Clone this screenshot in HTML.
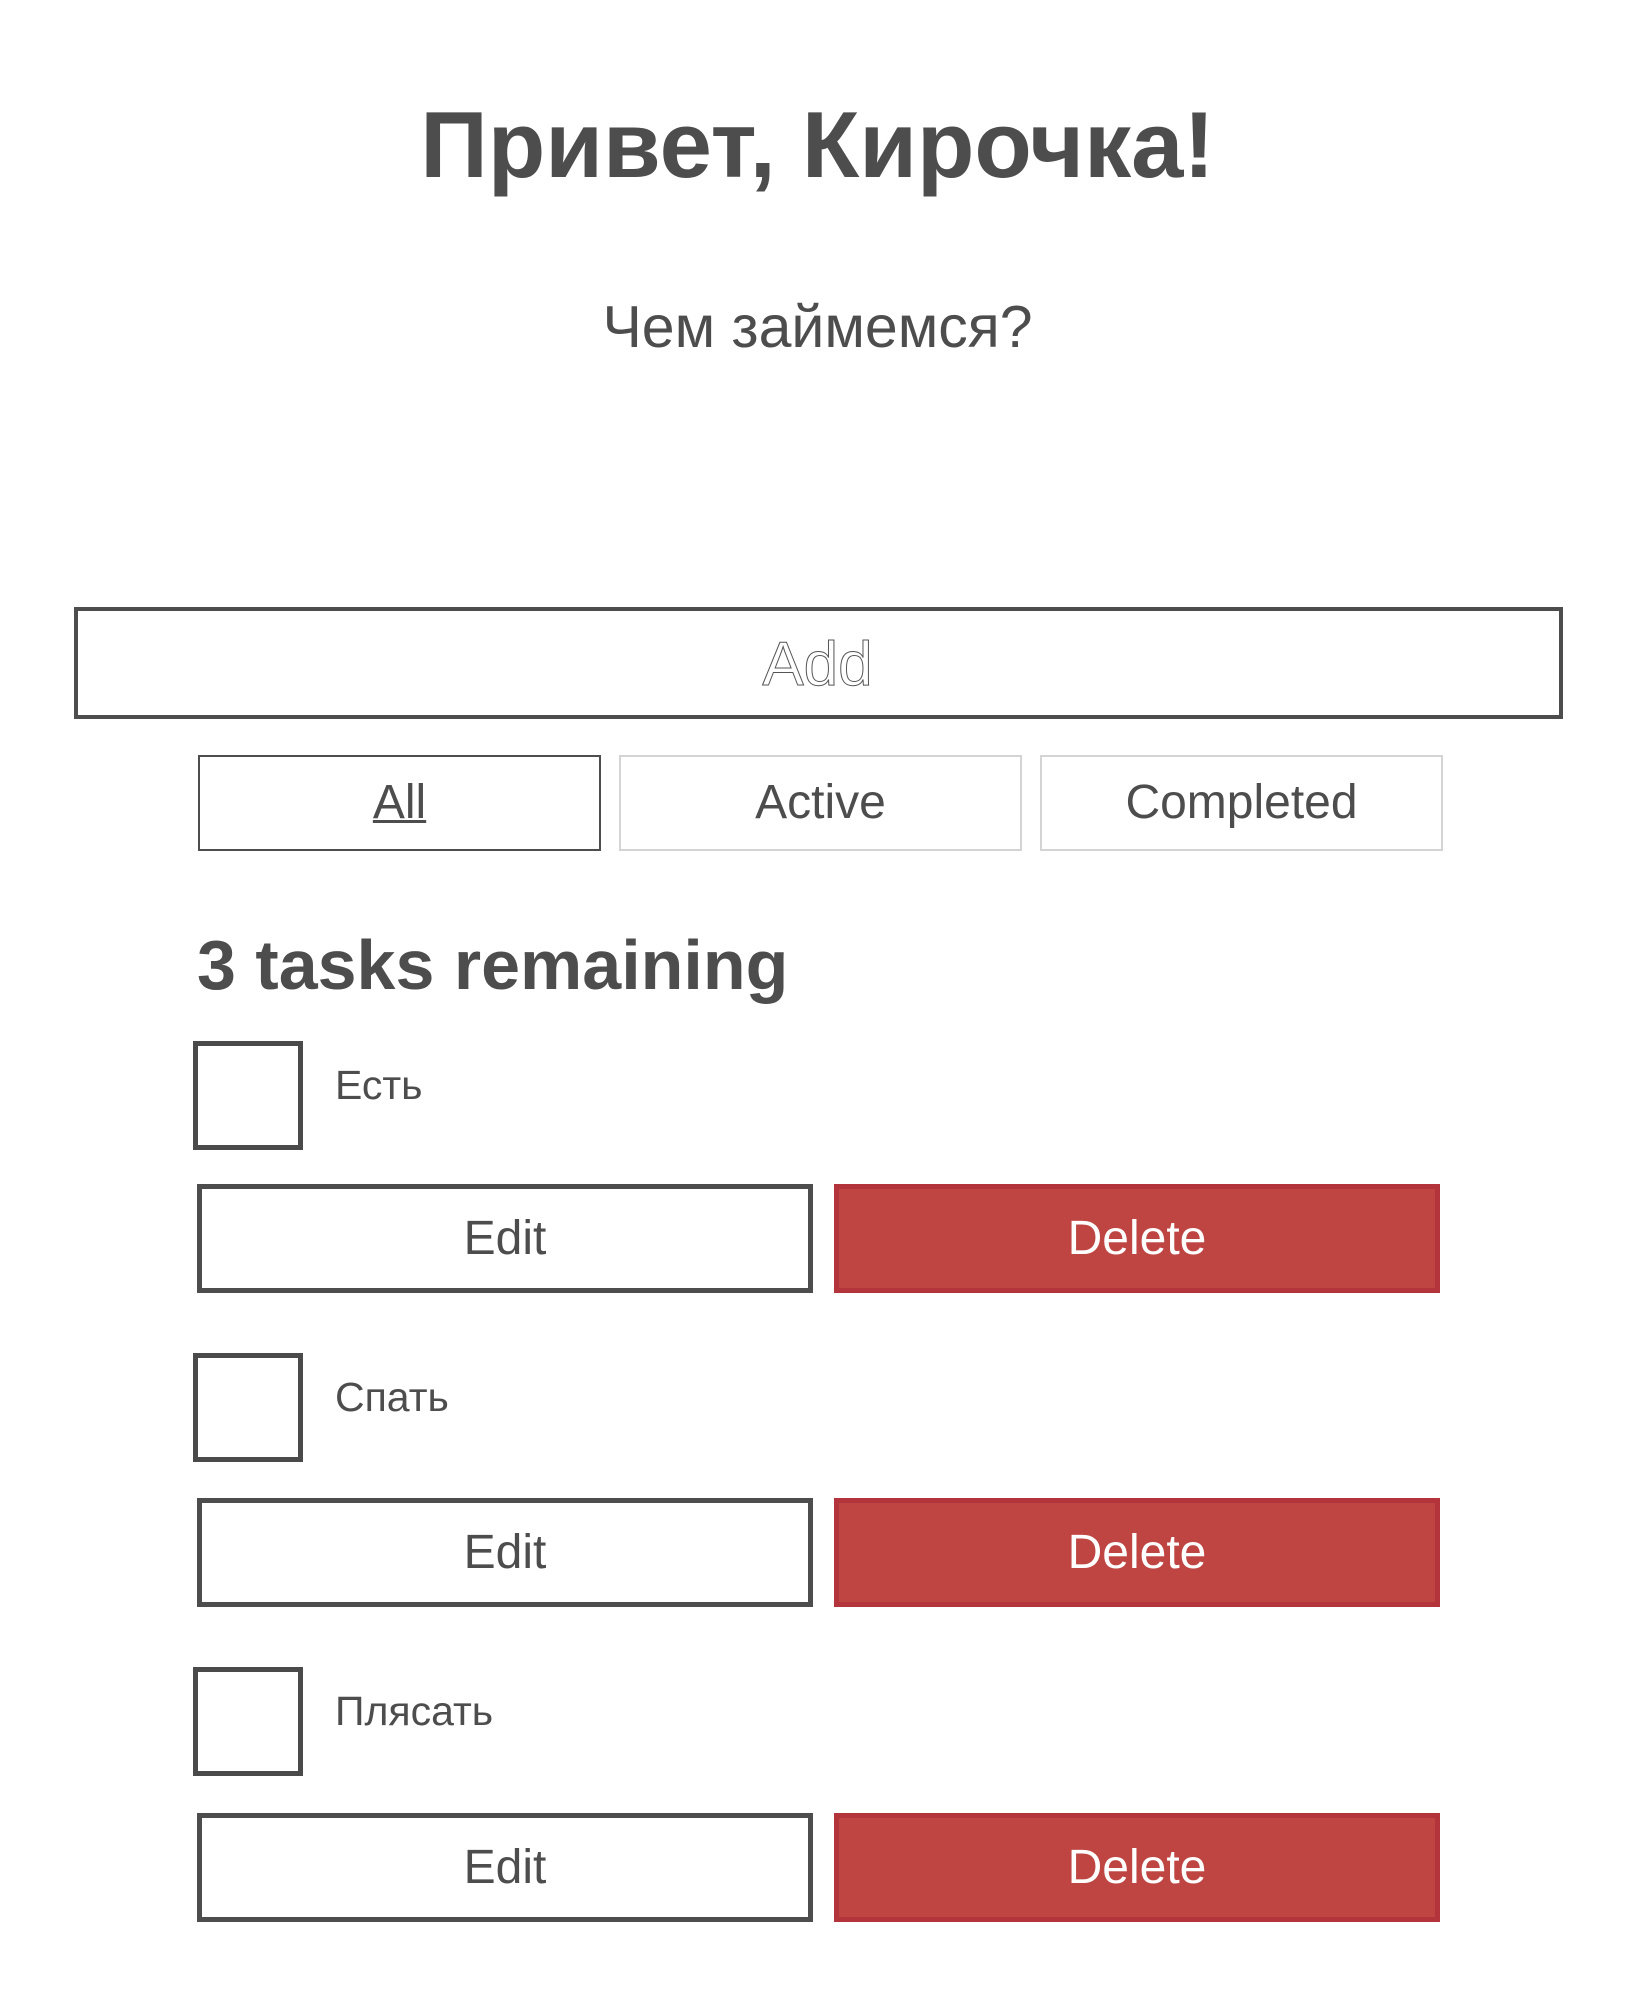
<!DOCTYPE html>
<html><head><meta charset="utf-8"><style>
*{margin:0;padding:0;box-sizing:border-box}
html,body{width:1635px;height:2015px;background:#fff;overflow:hidden}
body{position:relative;font-family:"Liberation Sans",Arial,sans-serif;color:#4d4d4d}
.a{position:absolute}
.t{white-space:nowrap;line-height:1}
.btn{position:absolute;display:flex;align-items:center;justify-content:center;font-size:48px;line-height:1}
.cb{position:absolute;width:110px;height:109px;border:5px solid #4a4a4a;background:#fff}
.lbl{position:absolute;font-size:41px;line-height:1;white-space:nowrap}
.edit{border:5px solid #4d4d4d;background:#fff;color:#4d4d4d}
.del{border:5px solid #b3343a;background:#bf4542;color:#fff}
</style></head><body>
<div class="a t" style="left:0;width:1635px;text-align:center;top:98px;font-size:94px;font-weight:bold">Привет, Кирочка!</div>
<div class="a t" style="left:0;width:1635px;text-align:center;top:298px;font-size:59px">Чем займемся?</div>
<div class="a" style="left:74px;top:607px;width:1489px;height:112px;border:4px solid #4d4d4d"></div>
<div class="a t" style="left:0;width:1635px;text-align:center;top:634px;font-size:62px;color:transparent;-webkit-text-stroke:1px #555">Add</div>
<div class="btn" style="left:198px;top:755px;width:403px;height:96px;border:2px solid #4d4d4d"><span style="text-decoration:underline;text-decoration-thickness:3px">All</span></div>
<div class="btn" style="left:619px;top:755px;width:403px;height:96px;border:2px solid #d4d4d4">Active</div>
<div class="btn" style="left:1040px;top:755px;width:403px;height:96px;border:2px solid #d4d4d4">Completed</div>
<div class="a t" style="left:197px;top:930px;font-size:70px;font-weight:bold">3 tasks remaining</div>

<div class="cb" style="left:193px;top:1041px"></div>
<div class="lbl" style="left:335px;top:1065px">Есть</div>
<div class="btn edit" style="left:197px;top:1184px;width:616px;height:109px">Edit</div>
<div class="btn del" style="left:834px;top:1184px;width:606px;height:109px">Delete</div>

<div class="cb" style="left:193px;top:1353px"></div>
<div class="lbl" style="left:335px;top:1377px">Спать</div>
<div class="btn edit" style="left:197px;top:1498px;width:616px;height:109px">Edit</div>
<div class="btn del" style="left:834px;top:1498px;width:606px;height:109px">Delete</div>

<div class="cb" style="left:193px;top:1667px"></div>
<div class="lbl" style="left:335px;top:1691px">Плясать</div>
<div class="btn edit" style="left:197px;top:1813px;width:616px;height:109px">Edit</div>
<div class="btn del" style="left:834px;top:1813px;width:606px;height:109px">Delete</div>
</body></html>
